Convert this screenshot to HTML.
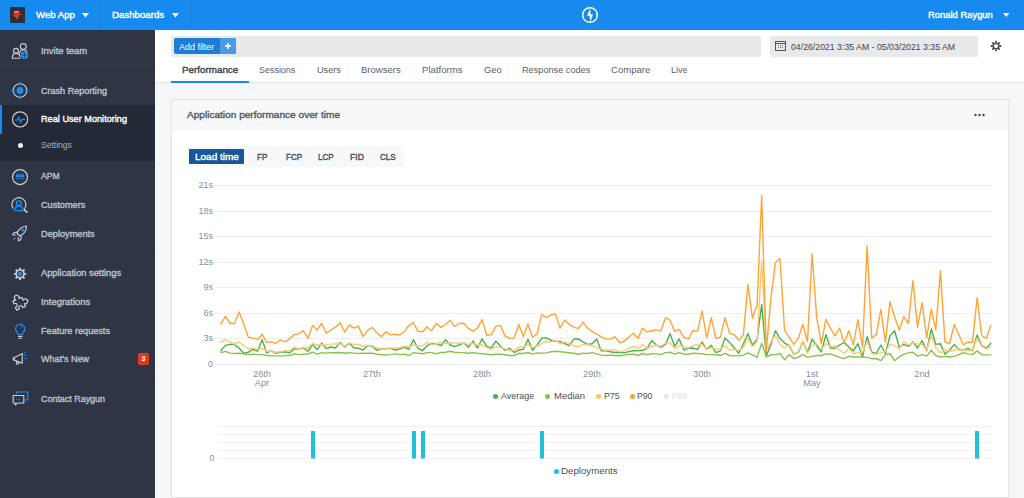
<!DOCTYPE html>
<html><head><meta charset="utf-8">
<style>
*{box-sizing:border-box;margin:0;padding:0}
html,body{width:1024px;height:498px;overflow:hidden;background:#f5f6f8;font-family:"Liberation Sans",sans-serif;}
.abs{position:absolute}
.tx{position:absolute;display:inline-block;line-height:12px;white-space:nowrap;transform-origin:0 50%}
#top{position:absolute;left:0;top:0;width:1024px;height:30px;background:#168aee}
#side{position:absolute;left:0;top:30px;width:155px;height:468px;background:#2f3545}
#side .sep{position:absolute;left:0;width:155px;height:1px;background:#292e3c}
#main{position:absolute;left:155px;top:30px;width:869px;height:53px;background:#fff}
#card{position:absolute;left:171px;top:99px;width:838px;height:398.5px;background:#fff;border:1px solid #e1e4e8}
#chead{position:absolute;left:0;top:0;width:836px;height:31px;background:#f7f8f9}
.yl{position:absolute;width:29px;text-align:right;font-size:9px;color:#8490a0;line-height:10px}
.xl{position:absolute;width:40px;text-align:center;font-size:9.2px;color:#8490a0;line-height:9px;margin-top:.6px}
</style></head><body>

<!-- TOP BAR -->
<div id="top">
  <div class="abs" style="left:10px;top:7px;width:15px;height:15.5px;background:#2b2f3c"></div>
  <svg class="abs" style="left:10px;top:7px" width="15" height="15" viewBox="0 0 15 15"><ellipse cx="6.5" cy="7" rx="3.2" ry="3.2" fill="#d9341c"/><rect x="4" y="4" width="5" height="1.4" fill="#e8a63a"/><rect x="9" y="7" width="3" height="1" fill="#c33"/><rect x="6.5" y="10" width="1" height="2" fill="#999"/></svg>
  <svg class="abs" style="left:82px;top:13px" width="7" height="5"><path d="M0 0H7L3.5 4.5Z" fill="#fff"/></svg>
  <div class="abs" style="left:100px;top:0;width:1px;height:30px;background:#1a7fd9"></div>
  <svg class="abs" style="left:172px;top:13px" width="7" height="5"><path d="M0 0H7L3.5 4.5Z" fill="#fff"/></svg>
  <div class="abs" style="left:190px;top:0;width:1px;height:30px;background:#1a7fd9"></div>
  <svg class="abs" style="left:580px;top:5px" width="20" height="20" viewBox="-10 -10 20 20"><circle cx="0" cy="0" r="7.300" fill="none" stroke="#fff" stroke-width="1.500"/><path d="M0 -6.600L-2.900 .850H-.500L.400 6.500L3 -.600H.700Z" fill="#fff"/></svg>
  <svg class="abs" style="left:1003px;top:13px" width="7" height="5"><path d="M0 0H6.4L3.2 4Z" fill="#fff"/></svg>
</div>

<!-- SIDEBAR -->
<div id="side">
  <div class="abs" style="left:0;top:75px;width:155px;height:56px;background:#242938"></div>
  <div class="abs" style="left:0;top:75px;width:2px;height:29px;background:#168aee"></div>
  <div class="sep" style="top:40px"></div>
  <div class="sep" style="top:223px"></div>
  <div class="sep" style="top:348px"></div>
  <div class="abs" style="left:17.6px;top:112.6px;width:5px;height:5px;border-radius:50%;background:#eef0f3"></div>
  <div class="abs" style="left:138px;top:323px;width:11px;height:12px;border-radius:2px;background:#e0391b;color:#fff;font-size:7px;font-weight:bold;text-align:center;line-height:12px">3</div>
  <svg class="abs" style="left:0;top:0" width="40" height="468" viewBox="0 30 40 468" fill="none" stroke-linecap="round" stroke-linejoin="round">
<g stroke="#c9cdd4" stroke-width="1.15">
<!-- invite team -->
<circle cx="23.3" cy="46.600" r="3"/><path d="M19.500 53.500c.5-2.500 1.800-3.800 3.800-3.800 1.800 0 3 .8 3.700 2.200"/>
<circle cx="16" cy="50.800" r="2.500"/><path d="M12.300 58.200h7.800M12.300 58.200c0-3.200 1.200-4.800 3.700-4.800s3.700 1.300 4 3.200"/>
<!-- crash -->
<circle cx="20" cy="90.500" r="6.800"/>
<!-- rum -->
<circle cx="20.100" cy="119.400" r="7.600"/>
<!-- apm -->
<circle cx="20" cy="177" r="7.500" stroke-width="1.250"/>
<!-- customers -->
<path d="M12.840 208.100A7 7 0 1 1 24.260 209.100"/><path d="M24.400 209.800l2.500 2.300" stroke-width="1.700"/>
<!-- rocket -->
<path d="M26.500 226c-4 .3-7.500 2.800-9.600 7l3 3c4.200-2 6.600-5.600 6.600-10z"/><path d="M17.500 232l-3.300.6-1.700 2.200 3.400.2M21.200 236l-.4 3.400-2.400 1.600-.2-3.400"/>
<!-- gear -->
<circle cx="20.100" cy="273.900" r="3.900" stroke-width="1.700"/>
<g stroke-width="1.900" stroke-linecap="butt"><path d="M20.100 267.700v1.800M20.100 278.300v1.800M13.900 273.900h1.800M24.500 273.900h1.800M15.700 269.500l1.300 1.300M23.200 277l1.300 1.300M15.700 278.300l1.300-1.300M23.200 270.800l1.300-1.300"/></g>
<!-- puzzle -->
<path d="M3 5H5.500a2 2 0 1 1 3 0H11V7.500a2 2 0 1 1 0 3V13H8.500a1.600 1.600 0 1 0 -3 0H3V10.500a1.600 1.600 0 1 0 0 -3Z" transform="translate(19.800 302.600) rotate(-22) scale(1.220) translate(-7.800 -8.300)" stroke-width="1"/>
<!-- bulb base -->
<path d="M18.400 336.400h3.600M18.800 338.200h2.800"/>
<!-- megaphone -->
<path d="M14.200 357.500l8-3.800v9.600l-8-3.200z"/><path d="M14.200 357.500c-1.600.2-1.600 2.600 0 2.600M16.500 361v3h2v-2.200"/>
<!-- chat -->
<path d="M13.200 395.500h10.600v7.500h-6.300l-2.300 2v-2h-2z"/>
</g>
<g stroke="#1d8ff5" stroke-width="1.200">
<!-- invite plus -->
<circle cx="24.500" cy="55.200" r="3.700" fill="#1d8ff5" stroke="none"/><path d="M24.500 53v4.400M22.300 55.200h4.400" stroke="#2f3545" stroke-width=".8"/>
<!-- crash bug -->
<circle cx="20" cy="90.500" r="2.800" fill="#1d8ff5"/><path d="M20 82.500v2.400M20 96.100v2.400M12 90.500h2.400M25.600 90.500h2.400" stroke-width="1.400"/>
<!-- rum pulse -->
<path d="M15.300 120h2.200l1.300-3 1.800 5.600 1.500-3.300h2.600" stroke-width="1.200"/>
<!-- apm -->
<rect x="15.900" y="174.300" width="8.300" height="2.900" fill="#1d8ff5" stroke="none"/><path d="M16.800 175.750h6.600" stroke="#2f3545" stroke-width=".7" stroke-dasharray="1.300 1" stroke-linecap="butt"/><path d="M16 178.800h8.200" stroke-width="1.100" stroke-dasharray="1.500 .8" stroke-linecap="butt"/>
<!-- customers -->
<circle cx="18.800" cy="203.200" r="2.400"/><path d="M14.600 210.600c0-3 1.600-4.400 4.200-4.400s4.200 1.400 4.200 4.400z"/>
<!-- rocket dots -->
<circle cx="22.800" cy="230" r=".9" fill="#1d8ff5"/><path d="M15.300 237.800l-1.800 1.800"/>
<!-- gear center -->
<circle cx="20.100" cy="273.900" r="2.100" fill="#1d8ff5" stroke="none"/>
<!-- bulb -->
<path d="M18 334.500c0-2-2.400-3-2.400-5.800a4.600 4.600 0 0 1 9.200 0c0 2.800-2.400 3.800-2.400 5.800z"/><path d="M20.500 325.700c1.200.2 2 1 2.200 2.200" stroke-width=".9"/>
<!-- megaphone waves -->
<path d="M24.500 356l1.800-1.400M24.800 358.600h2.200M23.800 353.800l.8-1.600" stroke-width="1"/>
<!-- chat -->
<path d="M16.500 393.500v-1.500h11.300v8h-2.500"/><path d="M16 399.300h4.500" stroke-width="1" stroke-dasharray="1 .8" stroke-linecap="butt"/>
</g>
</svg>

</div>

<!-- MAIN HEADER -->
<div id="main"></div>
<div class="abs" style="left:171px;top:36px;width:590px;height:20.5px;background:#e8e9ea;border-radius:2px"></div>
<div class="abs" style="left:173.5px;top:38px;width:62.3px;height:15.8px;background:#1c7cd6;border-radius:2px"></div>
<div class="abs" style="left:220.3px;top:38px;width:15.5px;height:15.8px;background:#4a9be4;border-radius:0 2px 2px 0"></div>
<svg class="abs" style="left:224px;top:42.2px" width="8" height="8"><path d="M4 1V7M1 4H7" stroke="#fff" stroke-width="1.5"/></svg>
<div class="abs" style="left:770px;top:36px;width:207.6px;height:20.5px;background:#e8e9ea;border-radius:2px"></div>
<svg class="abs" style="left:775px;top:41px" width="11" height="10" viewBox="0 0 11 10"><rect x=".5" y=".5" width="10" height="9" fill="none" stroke="#555" stroke-width="1"/><path d="M.5 2.5H10.5" stroke="#555"/><path d="M3 4.5H8M3 6.5H8" stroke="#777" stroke-width="1" stroke-dasharray="1 1"/></svg>
<svg class="abs" style="left:990px;top:40px" width="12" height="12" viewBox="0 0 13 13"><circle cx="6.5" cy="6.5" r="3.1" fill="none" stroke="#4a4a4a" stroke-width="1.6"/><g stroke="#4a4a4a" stroke-width="1.9"><path d="M6.5 .8V2.8M6.5 10.2V12.2M.8 6.5H2.8M10.2 6.5H12.2M2.5 2.5L3.9 3.9M9.1 9.1L10.5 10.5M2.5 10.5L3.9 9.1M9.1 3.9L10.5 2.5"/></g></svg>
<div class="abs" style="left:171px;top:81px;width:77.7px;height:2px;background:#168aee"></div>
<div class="abs" style="left:155px;top:82px;width:16px;height:1px;background:#e3e5e8"></div>
<div class="abs" style="left:249px;top:82px;width:775px;height:1px;background:#e3e5e8"></div>

<!-- CARD -->
<div id="card"><div id="chead"></div></div>
<svg class="abs" style="left:974px;top:113px" width="12" height="4"><circle cx="1.5" cy="2" r="1.2" fill="#444"/><circle cx="5.5" cy="2" r="1.2" fill="#444"/><circle cx="9.5" cy="2" r="1.2" fill="#444"/></svg>
<div class="abs" style="left:187px;top:146px;width:217px;height:21px;background:#f7f8f9"></div>
<div class="abs" style="left:189px;top:149px;width:55px;height:15px;background:#14589a;border-radius:1px"></div>

<!-- CHART -->
<svg class="abs" style="left:0;top:0" width="1024" height="498" viewBox="0 0 1024 498">
<g stroke="#edf0f2" stroke-width="1" shape-rendering="crispEdges">
<path d="M215 185.5H993M215 211.5H993M215 236.5H993M215 262.5H993M215 287.5H993M215 313.5H993M215 338.5H993M215 364.5H993"/>
<path stroke="#f0f1f3" d="M219 426.5H993M219 434.5H993M219 442.5H993M219 450.5H993M219 458.5H993"/>
</g>
<g fill="none" stroke-width="1.4" stroke-linejoin="round" stroke-linecap="round">
<path stroke="#4caf50" d="M220.9 350.7 L225.5 345.4 L230.1 344.1 L234.6 344.6 L239.2 348.3 L243.8 353.3 L248.4 352.2 L253.0 349.3 L257.6 351.2 L262.1 339.8 L266.7 352.9 L271.3 350.7 L275.9 353.3 L280.5 352.0 L285.1 351.7 L289.6 352.9 L294.2 349.0 L298.8 349.0 L303.4 348.0 L308.0 351.3 L312.6 344.4 L317.1 349.6 L321.7 343.1 L326.3 348.6 L330.9 347.0 L335.5 348.0 L340.1 342.4 L344.6 347.0 L349.2 343.1 L353.8 347.7 L358.4 348.3 L363.0 350.0 L367.6 345.4 L372.1 346.3 L376.7 350.3 L381.3 349.0 L385.9 348.7 L390.5 348.3 L395.1 350.0 L399.6 349.0 L404.2 347.0 L408.8 349.3 L413.4 339.8 L418.0 348.3 L422.6 350.5 L427.1 345.7 L431.7 343.5 L436.3 343.7 L440.9 345.7 L445.5 339.8 L450.1 345.0 L454.6 346.7 L459.2 344.8 L463.8 342.8 L468.4 347.3 L473.0 341.1 L477.5 348.0 L482.1 338.8 L486.7 346.3 L491.3 348.0 L495.9 341.1 L500.5 346.3 L505.0 350.3 L509.6 348.3 L514.2 352.6 L518.8 350.0 L523.4 349.3 L528.0 339.2 L532.5 350.3 L537.1 345.0 L541.7 338.1 L546.3 337.9 L550.9 340.2 L555.5 341.1 L560.0 341.5 L564.6 343.7 L569.2 345.7 L573.8 339.2 L578.4 338.8 L583.0 341.8 L587.5 344.4 L592.1 343.7 L596.7 338.9 L601.3 350.9 L605.9 350.9 L610.5 351.8 L615.0 352.5 L619.6 352.2 L624.2 352.9 L628.8 351.6 L633.4 350.5 L638.0 350.9 L642.5 350.3 L647.1 348.6 L651.7 340.5 L656.3 345.0 L660.9 347.3 L665.5 344.4 L670.0 333.7 L674.6 346.3 L679.2 338.9 L683.8 350.0 L688.4 348.3 L692.9 348.0 L697.5 349.3 L702.1 342.0 L706.7 349.6 L711.3 345.3 L715.9 352.6 L720.4 350.9 L725.0 337.9 L729.6 342.4 L734.2 347.7 L738.8 353.3 L743.4 343.7 L747.9 333.7 L752.5 345.0 L757.1 339.2 L761.7 304.6 L766.3 356.1 L770.9 344.4 L775.4 330.7 L780.0 338.5 L784.6 343.1 L789.2 345.7 L793.8 354.2 L798.4 352.2 L802.9 341.5 L807.5 352.2 L812.1 339.2 L816.7 345.7 L821.3 352.0 L825.9 334.6 L830.4 348.0 L835.0 348.3 L839.6 345.0 L844.2 342.4 L848.8 347.0 L853.4 350.9 L857.9 343.7 L862.5 356.8 L867.1 336.6 L871.7 352.2 L876.3 353.5 L880.9 345.0 L885.4 353.5 L890.0 335.9 L894.6 330.7 L899.2 347.0 L903.8 344.4 L908.4 346.3 L912.9 341.8 L917.5 348.0 L922.1 340.5 L926.7 350.9 L931.3 329.0 L935.8 344.4 L940.4 343.7 L945.0 354.2 L949.6 350.3 L954.2 344.4 L958.8 349.6 L963.3 350.3 L967.9 348.3 L972.5 350.9 L977.1 335.0 L981.7 345.7 L986.3 348.3 L990.8 343.1"/>
<path stroke="#8bc34a" d="M220.9 352.6 L225.5 351.3 L230.1 353.1 L234.6 353.5 L239.2 353.3 L243.8 353.9 L248.4 354.6 L253.0 354.3 L257.6 354.6 L262.1 354.6 L266.7 355.5 L271.3 355.9 L275.9 355.9 L280.5 356.1 L285.1 355.6 L289.6 355.6 L294.2 353.8 L298.8 354.6 L303.4 354.2 L308.0 354.0 L312.6 352.2 L317.1 354.2 L321.7 352.6 L326.3 353.1 L330.9 352.6 L335.5 352.7 L340.1 352.5 L344.6 353.3 L349.2 352.6 L353.8 353.1 L358.4 353.5 L363.0 353.1 L367.6 353.3 L372.1 353.1 L376.7 354.2 L381.3 354.8 L385.9 355.0 L390.5 354.6 L395.1 353.9 L399.6 354.6 L404.2 354.2 L408.8 355.5 L413.4 352.6 L418.0 353.3 L422.6 353.8 L427.1 352.6 L431.7 352.6 L436.3 353.8 L440.9 352.5 L445.5 352.2 L450.1 351.3 L454.6 352.2 L459.2 352.5 L463.8 352.6 L468.4 353.3 L473.0 352.6 L477.5 353.3 L482.1 353.8 L486.7 354.2 L491.3 354.8 L495.9 354.2 L500.5 354.2 L505.0 354.8 L509.6 355.5 L514.2 355.5 L518.8 353.3 L523.4 353.5 L528.0 352.5 L532.5 354.2 L537.1 352.9 L541.7 353.3 L546.3 352.9 L550.9 351.8 L555.5 351.3 L560.0 351.7 L564.6 352.2 L569.2 352.7 L573.8 353.3 L578.4 354.2 L583.0 353.1 L587.5 353.5 L592.1 352.6 L596.7 353.9 L601.3 355.1 L605.9 355.5 L610.5 355.1 L615.0 355.5 L619.6 355.7 L624.2 355.1 L628.8 354.4 L633.4 354.2 L638.0 355.5 L642.5 353.5 L647.1 354.6 L651.7 353.8 L656.3 353.9 L660.9 354.6 L665.5 352.6 L670.0 352.2 L674.6 354.2 L679.2 352.6 L683.8 354.2 L688.4 354.2 L692.9 353.3 L697.5 353.5 L702.1 353.8 L706.7 354.6 L711.3 354.6 L715.9 354.8 L720.4 355.5 L725.0 353.3 L729.6 355.5 L734.2 355.9 L738.8 355.7 L743.4 355.2 L747.9 352.9 L752.5 354.8 L757.1 357.4 L761.7 343.3 L766.3 356.8 L770.9 354.8 L775.4 354.6 L780.0 353.5 L784.6 359.8 L789.2 354.6 L793.8 358.5 L798.4 357.4 L802.9 354.2 L807.5 357.4 L812.1 356.4 L816.7 355.5 L821.3 355.5 L825.9 353.9 L830.4 354.2 L835.0 355.5 L839.6 357.4 L844.2 358.7 L848.8 356.1 L853.4 357.0 L857.9 357.0 L862.5 357.0 L867.1 357.4 L871.7 358.7 L876.3 358.5 L880.9 360.7 L885.4 354.8 L890.0 353.5 L894.6 360.7 L899.2 356.8 L903.8 354.2 L908.4 352.9 L912.9 352.2 L917.5 356.1 L922.1 354.6 L926.7 356.1 L931.3 350.3 L935.8 355.5 L940.4 357.0 L945.0 356.4 L949.6 357.0 L954.2 356.4 L958.8 354.6 L963.3 352.6 L967.9 353.9 L972.5 354.6 L977.1 350.9 L981.7 354.6 L986.3 355.1 L990.8 354.6"/>
<path stroke="#ffc873" d="M220.9 342.4 L225.5 339.6 L230.1 341.8 L234.6 344.0 L239.2 342.0 L243.8 345.7 L248.4 349.0 L253.0 348.0 L257.6 349.0 L262.1 348.6 L266.7 350.9 L271.3 351.2 L275.9 352.2 L280.5 351.6 L285.1 350.7 L289.6 350.7 L294.2 347.0 L298.8 349.3 L303.4 347.3 L308.0 348.3 L312.6 343.3 L317.1 345.0 L321.7 344.6 L326.3 345.0 L330.9 344.1 L335.5 343.9 L340.1 343.7 L344.6 346.3 L349.2 342.8 L353.8 344.4 L358.4 344.4 L363.0 346.3 L367.6 345.4 L372.1 345.7 L376.7 348.0 L381.3 349.0 L385.9 349.0 L390.5 348.0 L395.1 348.0 L399.6 347.8 L404.2 346.3 L408.8 347.0 L413.4 345.0 L418.0 346.0 L422.6 345.7 L427.1 342.7 L431.7 344.4 L436.3 343.7 L440.9 342.4 L445.5 343.7 L450.1 342.8 L454.6 343.1 L459.2 343.3 L463.8 343.1 L468.4 344.4 L473.0 343.3 L477.5 345.0 L482.1 344.8 L486.7 347.7 L491.3 349.0 L495.9 346.7 L500.5 347.3 L505.0 349.0 L509.6 350.7 L514.2 350.3 L518.8 347.3 L523.4 346.7 L528.0 344.6 L532.5 347.3 L537.1 346.0 L541.7 343.7 L546.3 341.5 L550.9 341.8 L555.5 340.1 L560.0 343.7 L564.6 342.0 L569.2 343.7 L573.8 345.7 L578.4 346.7 L583.0 344.4 L587.5 344.8 L592.1 345.7 L596.7 347.7 L601.3 349.3 L605.9 350.3 L610.5 349.6 L615.0 349.9 L619.6 351.6 L624.2 350.9 L628.8 348.0 L633.4 346.3 L638.0 348.6 L642.5 344.4 L647.1 348.6 L651.7 346.7 L656.3 345.0 L660.9 346.3 L665.5 343.1 L670.0 342.8 L674.6 348.3 L679.2 345.4 L683.8 347.3 L688.4 347.7 L692.9 345.7 L697.5 344.6 L702.1 344.4 L706.7 349.6 L711.3 347.7 L715.9 348.6 L720.4 349.6 L725.0 345.4 L729.6 350.3 L734.2 349.3 L738.8 350.3 L743.4 347.7 L747.9 338.5 L752.5 346.7 L757.1 341.8 L761.7 260.3 L766.3 350.3 L770.9 341.8 L775.4 335.2 L780.0 344.4 L784.6 348.0 L789.2 344.6 L793.8 353.8 L798.4 351.6 L802.9 340.7 L807.5 353.5 L812.1 345.7 L816.7 343.7 L821.3 349.6 L825.9 343.7 L830.4 346.3 L835.0 346.3 L839.6 350.3 L844.2 353.5 L848.8 348.3 L853.4 353.5 L857.9 352.9 L862.5 352.2 L867.1 341.8 L871.7 353.5 L876.3 354.2 L880.9 352.9 L885.4 351.6 L890.0 344.4 L894.6 345.7 L899.2 349.0 L903.8 341.5 L908.4 345.0 L912.9 342.4 L917.5 344.4 L922.1 344.4 L926.7 350.3 L931.3 335.2 L935.8 347.7 L940.4 352.9 L945.0 349.9 L949.6 351.2 L954.2 350.3 L958.8 348.6 L963.3 350.3 L967.9 350.3 L972.5 350.3 L977.1 337.9 L981.7 346.3 L986.3 349.0 L990.8 346.3"/>
<path stroke="#ffa535" d="M220.9 324.2 L225.5 316.3 L230.1 323.5 L234.6 323.5 L239.2 312.0 L243.8 324.2 L248.4 337.2 L253.0 337.9 L257.6 339.4 L262.1 334.2 L266.7 342.4 L271.3 341.8 L275.9 343.3 L280.5 339.8 L285.1 341.8 L289.6 338.9 L294.2 334.6 L298.8 333.7 L303.4 330.7 L308.0 338.3 L312.6 325.5 L317.1 330.0 L321.7 323.2 L326.3 333.3 L330.9 330.0 L335.5 327.2 L340.1 322.8 L344.6 332.0 L349.2 325.1 L353.8 328.1 L358.4 326.1 L363.0 336.6 L367.6 330.3 L372.1 327.4 L376.7 332.6 L381.3 336.8 L385.9 331.7 L390.5 334.9 L395.1 334.3 L399.6 334.9 L404.2 331.7 L408.8 325.5 L413.4 322.6 L418.0 331.3 L422.6 331.7 L427.1 326.8 L431.7 330.7 L436.3 323.5 L440.9 327.4 L445.5 324.5 L450.1 320.2 L454.6 326.5 L459.2 323.5 L463.8 323.2 L468.4 328.7 L473.0 331.1 L477.5 328.1 L482.1 319.6 L486.7 335.2 L491.3 334.6 L495.9 326.1 L500.5 325.5 L505.0 335.9 L509.6 338.3 L514.2 337.9 L518.8 324.5 L523.4 336.6 L528.0 323.8 L532.5 337.2 L537.1 333.9 L541.7 314.4 L546.3 317.6 L550.9 315.0 L555.5 314.1 L560.0 328.1 L564.6 320.0 L569.2 324.2 L573.8 327.2 L578.4 328.7 L583.0 322.2 L587.5 328.1 L592.1 331.3 L596.7 334.2 L601.3 336.8 L605.9 338.8 L610.5 338.9 L615.0 336.8 L619.6 342.8 L624.2 341.1 L628.8 337.2 L633.4 333.3 L638.0 338.5 L642.5 328.1 L647.1 332.0 L651.7 330.7 L656.3 329.8 L660.9 331.1 L665.5 317.6 L670.0 320.2 L674.6 331.3 L679.2 329.4 L683.8 337.2 L688.4 339.2 L692.9 330.7 L697.5 331.3 L702.1 311.1 L706.7 337.5 L711.3 317.6 L715.9 338.5 L720.4 337.2 L725.0 317.6 L729.6 333.3 L734.2 334.6 L738.8 340.5 L743.4 334.6 L747.9 284.6 L752.5 318.3 L757.1 304.6 L761.7 195.5 L766.3 350.9 L770.9 298.0 L775.4 262.8 L780.0 258.5 L784.6 330.7 L789.2 337.2 L793.8 344.4 L798.4 337.9 L802.9 324.5 L807.5 341.5 L812.1 254.0 L816.7 317.6 L821.3 343.7 L825.9 319.3 L830.4 328.1 L835.0 335.9 L839.6 328.1 L844.2 343.1 L848.8 330.7 L853.4 345.0 L857.9 319.6 L862.5 347.7 L867.1 246.0 L871.7 338.1 L876.3 334.6 L880.9 309.4 L885.4 342.4 L890.0 301.6 L894.6 317.0 L899.2 330.0 L903.8 316.7 L908.4 323.5 L912.9 280.8 L917.5 327.4 L922.1 302.6 L926.7 337.9 L931.3 309.1 L935.8 330.0 L940.4 271.0 L945.0 342.0 L949.6 343.7 L954.2 324.5 L958.8 334.6 L963.3 345.0 L967.9 342.0 L972.5 342.4 L977.1 298.0 L981.7 335.5 L986.3 338.5 L990.8 325.1"/>
</g>
<g fill="#20c0da"><rect x="311" y="431" width="4" height="27.5"/><rect x="412" y="431" width="4" height="27.5"/><rect x="421" y="431" width="4" height="27.5"/><rect x="540" y="431" width="4" height="27.5"/><rect x="975" y="431" width="4" height="27.5"/></g>
</svg>
<div class="yl" style="left:184px;top:180.0px">21s</div>
<div class="yl" style="left:184px;top:205.5px">18s</div>
<div class="yl" style="left:184px;top:231.1px">15s</div>
<div class="yl" style="left:184px;top:256.6px">12s</div>
<div class="yl" style="left:184px;top:282.2px">9s</div>
<div class="yl" style="left:184px;top:307.8px">6s</div>
<div class="yl" style="left:184px;top:333.3px">3s</div>
<div class="yl" style="left:184px;top:358.9px">0</div>
<div class="yl" style="left:185.5px;top:452.5px">0</div>
<div class="xl" style="left:242px;top:369px">26th<br>Apr</div>
<div class="xl" style="left:352px;top:369px">27th</div>
<div class="xl" style="left:462px;top:369px">28th</div>
<div class="xl" style="left:572px;top:369px">29th</div>
<div class="xl" style="left:682px;top:369px">30th</div>
<div class="xl" style="left:792px;top:369px">1st<br>May</div>
<div class="xl" style="left:902px;top:369px">2nd</div>

<div class="abs" style="left:492px;top:393px;width:5px;height:5px;margin:.5px;border-radius:50%;background:#4caf50"></div>
<div class="abs" style="left:544px;top:393px;width:5px;height:5px;margin:.5px;border-radius:50%;background:#8bc34a"></div>
<div class="abs" style="left:595px;top:393px;width:5px;height:5px;margin:.5px;border-radius:50%;background:#ffc266"></div>
<div class="abs" style="left:629px;top:393px;width:5px;height:5px;margin:.5px;border-radius:50%;background:#ff9f2e"></div>
<div class="abs" style="left:663px;top:393px;width:5px;height:5px;margin:.5px;border-radius:50%;background:#e6e9ec"></div>
<div class="abs" style="left:553px;top:468px;width:5px;height:5px;margin:.5px;border-radius:50%;background:#20c0da"></div>
<span id="t0" class="tx" style="left:35.7px;top:8.9px;font-size:9.3px;color:#fff;font-weight:normal;-webkit-text-stroke:.38px #fff;transform:scaleX(1.0342);">Web App</span>
<span id="t1" class="tx" style="left:112.3px;top:8.9px;font-size:9.3px;color:#fff;font-weight:normal;-webkit-text-stroke:.38px #fff;transform:scaleX(1.0400);">Dashboards</span>
<span id="t2" class="tx" style="left:927.9px;top:9.0px;font-size:9.4px;color:#fff;font-weight:normal;-webkit-text-stroke:.38px #fff;transform:scaleX(1.0031);">Ronald Raygun</span>
<span id="t3" class="tx" style="left:41.0px;top:45.0px;font-size:9.4px;color:#bcc1ca;font-weight:normal;-webkit-text-stroke:.38px #bcc1ca;transform:scaleX(1.0065);">Invite team</span>
<span id="t4" class="tx" style="left:41.0px;top:84.5px;font-size:9.4px;color:#bcc1ca;font-weight:normal;-webkit-text-stroke:.38px #bcc1ca;transform:scaleX(0.9662);">Crash Reporting</span>
<span id="t5" class="tx" style="left:41.0px;top:170.3px;font-size:9.4px;color:#bcc1ca;font-weight:normal;-webkit-text-stroke:.38px #bcc1ca;transform:scaleX(0.9150);">APM</span>
<span id="t6" class="tx" style="left:41.0px;top:199.0px;font-size:9.4px;color:#bcc1ca;font-weight:normal;-webkit-text-stroke:.38px #bcc1ca;transform:scaleX(0.9778);">Customers</span>
<span id="t7" class="tx" style="left:41.0px;top:227.5px;font-size:9.4px;color:#bcc1ca;font-weight:normal;-webkit-text-stroke:.38px #bcc1ca;transform:scaleX(0.9818);">Deployments</span>
<span id="t8" class="tx" style="left:41.0px;top:267.3px;font-size:9.4px;color:#bcc1ca;font-weight:normal;-webkit-text-stroke:.38px #bcc1ca;transform:scaleX(0.9914);">Application settings</span>
<span id="t9" class="tx" style="left:41.0px;top:295.7px;font-size:9.4px;color:#bcc1ca;font-weight:normal;-webkit-text-stroke:.38px #bcc1ca;transform:scaleX(1.0061);">Integrations</span>
<span id="t10" class="tx" style="left:41.0px;top:324.5px;font-size:9.4px;color:#bcc1ca;font-weight:normal;-webkit-text-stroke:.38px #bcc1ca;transform:scaleX(0.9732);">Feature requests</span>
<span id="t11" class="tx" style="left:41.0px;top:353.0px;font-size:9.4px;color:#bcc1ca;font-weight:normal;-webkit-text-stroke:.38px #bcc1ca;transform:scaleX(0.9680);">What&#39;s New</span>
<span id="t12" class="tx" style="left:41.0px;top:393.0px;font-size:9.4px;color:#bcc1ca;font-weight:normal;-webkit-text-stroke:.38px #bcc1ca;transform:scaleX(0.9522);">Contact Raygun</span>
<span id="t13" class="tx" style="left:41.0px;top:113.3px;font-size:9.4px;color:#fff;font-weight:normal;-webkit-text-stroke:.38px #fff;transform:scaleX(0.9773);">Real User Monitoring</span>
<span id="t14" class="tx" style="left:41.0px;top:139.3px;font-size:9.4px;color:#a9afb9;font-weight:normal;transform:scaleX(0.9118);">Settings</span>
<span id="t15" class="tx" style="left:179.0px;top:40.9px;font-size:9.4px;color:#fff;font-weight:normal;transform:scaleX(0.9541);">Add filter</span>
<span id="t16" class="tx" style="left:790.8px;top:40.8px;font-size:8.6px;color:#3f454e;font-weight:normal;transform:scaleX(1.0160);">04/26/2021 3:35 AM - 05/03/2021 3:35 AM</span>
<span id="t17" class="tx" style="left:181.7px;top:63.5px;font-size:9.6px;color:#3f434a;font-weight:normal;-webkit-text-stroke:.38px #3f434a;transform:scaleX(1.0236);">Performance</span>
<span id="t18" class="tx" style="left:259.3px;top:63.5px;font-size:9.7px;color:#5a606b;font-weight:normal;transform:scaleX(0.9231);">Sessions</span>
<span id="t19" class="tx" style="left:316.7px;top:63.5px;font-size:9.7px;color:#5a606b;font-weight:normal;transform:scaleX(0.9440);">Users</span>
<span id="t20" class="tx" style="left:361.3px;top:63.5px;font-size:9.7px;color:#5a606b;font-weight:normal;transform:scaleX(0.9850);">Browsers</span>
<span id="t21" class="tx" style="left:422.0px;top:63.5px;font-size:9.7px;color:#5a606b;font-weight:normal;transform:scaleX(0.9927);">Platforms</span>
<span id="t22" class="tx" style="left:483.6px;top:63.5px;font-size:9.7px;color:#5a606b;font-weight:normal;transform:scaleX(0.9667);">Geo</span>
<span id="t23" class="tx" style="left:521.7px;top:63.5px;font-size:9.7px;color:#5a606b;font-weight:normal;transform:scaleX(0.9458);">Response codes</span>
<span id="t24" class="tx" style="left:610.5px;top:63.5px;font-size:9.7px;color:#5a606b;font-weight:normal;transform:scaleX(0.9875);">Compare</span>
<span id="t25" class="tx" style="left:670.7px;top:63.5px;font-size:9.7px;color:#5a606b;font-weight:normal;transform:scaleX(0.9278);">Live</span>
<span id="t26" class="tx" style="left:187.3px;top:109.0px;font-size:9.7px;color:#555a62;font-weight:normal;-webkit-text-stroke:.38px #555a62;transform:scaleX(1.0408);">Application performance over time</span>
<span id="t27" class="tx" style="left:195.0px;top:150.5px;font-size:9.6px;color:#fff;font-weight:normal;-webkit-text-stroke:.38px #fff;transform:scaleX(1.0405);">Load time</span>
<span id="t28" class="tx" style="left:257.0px;top:150.5px;font-size:9.6px;color:#484d55;font-weight:normal;-webkit-text-stroke:.38px #484d55;transform:scaleX(0.8583);">FP</span>
<span id="t29" class="tx" style="left:285.7px;top:150.5px;font-size:9.6px;color:#484d55;font-weight:normal;-webkit-text-stroke:.38px #484d55;transform:scaleX(0.8421);">FCP</span>
<span id="t30" class="tx" style="left:317.7px;top:150.5px;font-size:9.6px;color:#484d55;font-weight:normal;-webkit-text-stroke:.38px #484d55;transform:scaleX(0.8421);">LCP</span>
<span id="t31" class="tx" style="left:350.0px;top:150.5px;font-size:9.6px;color:#484d55;font-weight:normal;-webkit-text-stroke:.38px #484d55;transform:scaleX(0.9133);">FID</span>
<span id="t32" class="tx" style="left:380.3px;top:150.5px;font-size:9.6px;color:#484d55;font-weight:normal;-webkit-text-stroke:.38px #484d55;transform:scaleX(0.8421);">CLS</span>
<span id="t33" class="tx" style="left:500.7px;top:390.0px;font-size:9.6px;color:#4a4f58;font-weight:normal;transform:scaleX(0.9333);">Average</span>
<span id="t34" class="tx" style="left:553.5px;top:390.0px;font-size:9.6px;color:#4a4f58;font-weight:normal;transform:scaleX(0.9871);">Median</span>
<span id="t35" class="tx" style="left:603.5px;top:390.0px;font-size:9.6px;color:#4a4f58;font-weight:normal;transform:scaleX(0.9176);">P75</span>
<span id="t36" class="tx" style="left:637.4px;top:390.0px;font-size:9.6px;color:#4a4f58;font-weight:normal;transform:scaleX(0.9000);">P90</span>
<span id="t37" class="tx" style="left:671.9px;top:390.0px;font-size:9.6px;color:#dde0e4;font-weight:normal;transform:scaleX(0.8824);">P99</span>
<span id="t38" class="tx" style="left:560.8px;top:465.0px;font-size:9.6px;color:#4a4f58;font-weight:normal;transform:scaleX(1.0107);">Deployments</span>
</body></html>
